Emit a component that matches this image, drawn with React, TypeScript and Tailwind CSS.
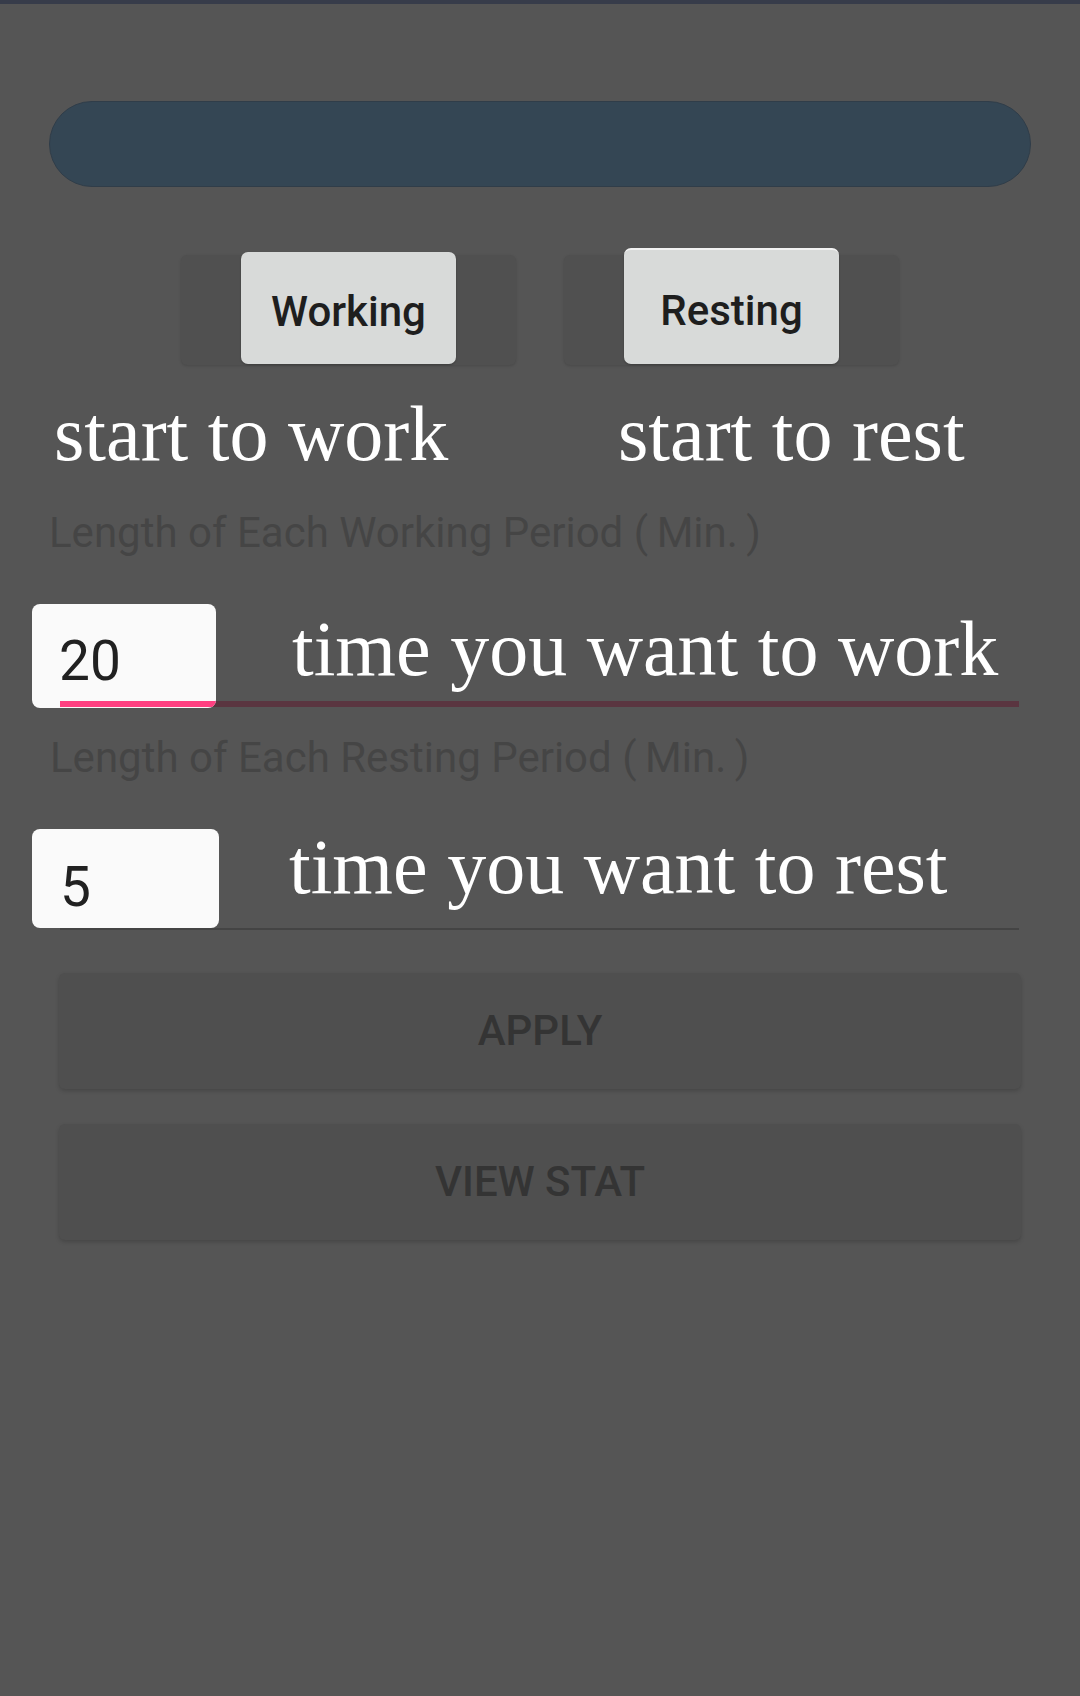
import React from "react";

const roboto = "font-['Roboto','Liberation_Sans',sans-serif]";
const serif = "font-['Liberation_Serif','DejaVu_Serif',serif]";

function ModeButton({ label, tall }: { label: string; tall?: boolean }) {
    return (
        <div className="flex h-[110px] w-[335px] items-end justify-center rounded-md bg-[#505050] shadow-[0_1px_3px_rgba(0,0,0,0.15)]">
            <div
                className={`mb-[1px] flex w-[215px] items-center justify-center rounded-[7px] bg-[#d8dad9] pt-[8px] shadow-[0_1px_2px_rgba(0,0,0,0.25)] ${
                    tall ? "h-[116px] border-t-2 border-[#f2f2f2]" : "h-[112px]"
                }`}
            >
                <span className={`${roboto} text-[42px] font-medium leading-none text-[#1e1e1e]`}>
                    {label}
                </span>
            </div>
        </div>
    );
}

function ActionButton({ label }: { label: string }) {
    return (
        <div className="flex h-[116px] items-center justify-center rounded-md bg-[#4f4f4f] shadow-[0_2px_4px_rgba(0,0,0,0.18)]">
            <span className={`${roboto} text-[42px] font-medium leading-none text-[#343434]`}>
                {label}
            </span>
        </div>
    );
}

export default function App() {
    return (
        <div className="flex min-h-[1696px] w-full flex-col bg-[#555555]">
            {/* status strip */}
            <div className="h-[4px] bg-[#373c4a]" />

            {/* progress pill */}
            <div className="mx-[49px] mt-[97px] h-[86px] rounded-full border border-[#303d49] bg-[#344654]" />

            {/* mode buttons */}
            <div className="mt-[68px] flex justify-center gap-[48px]">
                <ModeButton label="Working" />
                <ModeButton label="Resting" tall />
            </div>

            {/* captions */}
            <div className={`${serif} mt-[30px] flex pl-[54px] text-[78px] leading-none text-white`}>
                <span className="w-[564px]">start to work</span>
                <span>start to rest</span>
            </div>

            <p className={`${roboto} ml-[49px] mt-[39px] text-[42px] leading-none text-[#454545]`}>
                Length of Each Working Period (&#8201;Min.&#8201;)
            </p>

            {/* working length */}
            <div className="ml-[60px] mr-[61px] mt-[50px] flex items-end border-b-[6px] border-[#5a3540]">
                <div className="relative z-10 -mb-[7px] -ml-[28px] flex h-[104px] w-[184px] shrink-0 items-center overflow-hidden rounded-lg bg-[#fafafa] pl-[27px] pt-[10px]">
                    <span className={`${roboto} text-[55px] leading-none text-[#212121]`}>20</span>
                    <div className="absolute bottom-[1px] left-[28px] right-0 h-[6px] bg-[#ff4081]" />
                </div>
                <span className={`${serif} mb-[13px] ml-[76px] text-[78px] leading-none text-white`}>
                    time you want to work
                </span>
            </div>

            <p className={`${roboto} ml-[50px] mt-[30px] text-[42px] leading-none text-[#454545]`}>
                Length of Each Resting Period (&#8201;Min.&#8201;)
            </p>

            {/* resting length */}
            <div className="ml-[60px] mr-[61px] mt-[49px] flex items-end border-b-2 border-[#444444]">
                <div className="-ml-[28px] flex h-[99px] w-[187px] shrink-0 items-center rounded-lg bg-[#fafafa] pl-[28px] pt-[18px]">
                    <span className={`${roboto} text-[55px] leading-none text-[#212121]`}>5</span>
                </div>
                <span className={`${serif} mb-[22px] ml-[70px] text-[78px] leading-none text-white`}>
                    time you want to rest
                </span>
            </div>

            {/* actions */}
            <div className="mx-[59px] mt-[43px] flex flex-col gap-[35px]">
                <ActionButton label="APPLY" />
                <ActionButton label="VIEW STAT" />
            </div>
        </div>
    );
}
